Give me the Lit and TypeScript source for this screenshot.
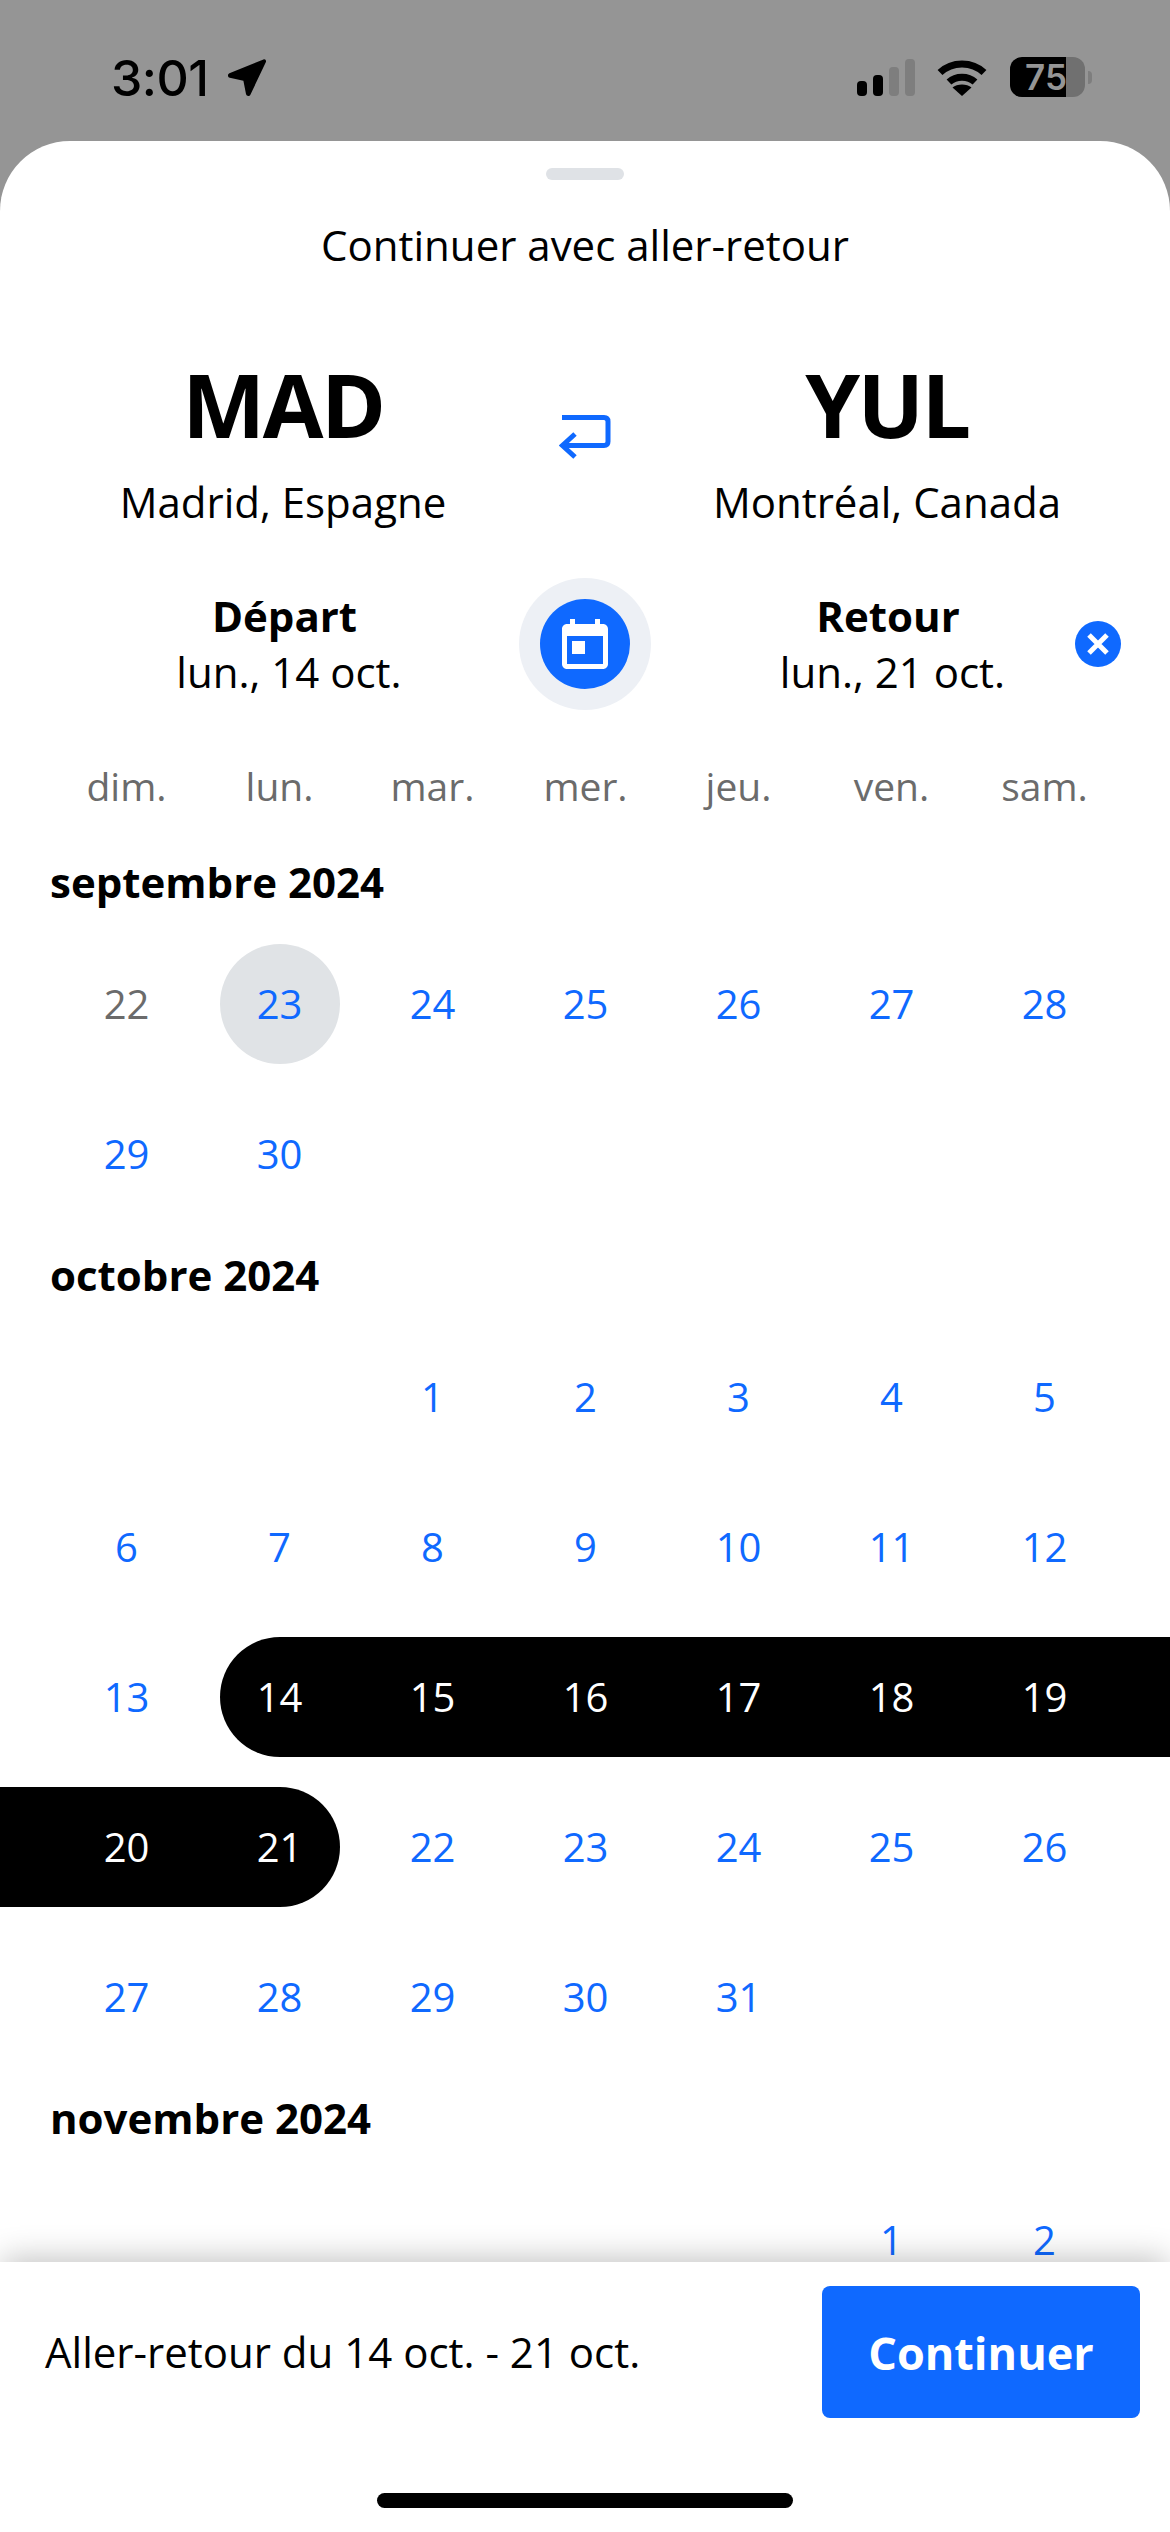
import { LitElement, html, css } from "lit";
import { customElement } from "lit/decorators.js";
import { classMap } from "lit/directives/class-map.js";

const WEEKDAYS = ["dim.", "lun.", "mar.", "mer.", "jeu.", "ven.", "sam."];

interface Month {
    title: string;
    offset: number; // empty cells before the first shown day
    first: number;
    last: number;
}

const MONTHS: Month[] = [
    { title: "septembre 2024", offset: 0, first: 22, last: 30 },
    { title: "octobre 2024", offset: 2, first: 1, last: 31 },
    { title: "novembre 2024", offset: 5, first: 1, last: 2 },
];

@customElement("app-root")
export class AppRoot extends LitElement {
    static styles = css`
        :host {
            display: block;
            width: 1170px;
            height: 2532px;
            overflow: hidden;
            background-color: #959595;
            font-family: "Open Sans", sans-serif;
            color: #000;
        }

        .status {
            box-sizing: border-box;
            display: flex;
            align-items: flex-start;
            height: 141px;
            padding: 57px 78px 0px 111px;
        }

        .time {
            font-family: "Inter", sans-serif;
            font-size: 50px;
            line-height: 42px;
            font-weight: 500;
            letter-spacing: -0.5px;
        }

        .arrow {
            margin: 1px 0px 0px 18px;
        }

        .status-right {
            display: flex;
            align-items: flex-start;
            margin-left: auto;
        }

        .signal {
            display: flex;
            align-items: flex-end;
            gap: 6px;
            height: 37px;
            margin-top: 2px;
        }

        .signal span {
            width: 10px;
            border-radius: 4px;
            background-color: #000;
        }

        .signal span.off {
            background-color: #7e7e7e;
        }

        .wifi {
            margin: 2px 23px 0px 22px;
        }

        .battery {
            display: flex;
            align-items: center;
            justify-content: center;
            box-sizing: border-box;
            width: 75px;
            height: 40px;
            padding-right: 3px;
            border-radius: 12px;
            background: linear-gradient(to right, #000 56px, #707070 56px);
            font-family: "Inter", sans-serif;
            font-size: 35px;
            font-weight: 600;
            color: #959595;
        }

        .nub {
            width: 4px;
            height: 13px;
            margin: 14px 0px 0px 3px;
            border-radius: 0px 4px 4px 0px;
            background-color: #7e7e7e;
        }

        .sheet {
            display: flex;
            flex-direction: column;
            height: 2391px;
            overflow: hidden;
            border-radius: 70px 70px 0px 0px;
            background-color: #fff;
        }

        .handle {
            flex: none;
            width: 78px;
            height: 12px;
            margin: 27px auto 0px auto;
            border-radius: 6px;
            background-color: #dfe2e6;
        }

        .title {
            flex: none;
            margin-top: 36px;
            text-align: center;
            font-size: 42px;
            line-height: 58px;
        }

        .route {
            flex: none;
            display: grid;
            grid-template-columns: 566px 38px 566px;
            margin-top: 84px;
        }

        .place {
            text-align: center;
            font-size: 42px;
            line-height: 56px;
        }

        .code {
            font-size: 88px;
            line-height: 92px;
            font-weight: 700;
            letter-spacing: -2.5px;
            margin-bottom: 24px;
        }

        .swap {
            align-self: start;
            margin: 57px 0px 0px -7px;
        }

        .dates {
            flex: none;
            display: grid;
            grid-template-columns: 519px 132px 519px;
            align-items: center;
            margin-top: 48px;
        }

        .date {
            position: relative;
            text-align: center;
            font-size: 42px;
            line-height: 56px;
        }

        .date.left {
            padding-left: 50px;
        }

        .date.right {
            padding-right: 45px;
        }

        .date b {
            display: block;
            font-weight: 700;
            font-size: 42px;
        }

        .date span {
            display: block;
            margin-left: 9px;
        }

        .cal-btn {
            display: flex;
            align-items: center;
            justify-content: center;
            width: 132px;
            height: 132px;
            border-radius: 50%;
            background-color: #edf0f5;
        }

        .cal-btn div {
            display: flex;
            align-items: center;
            justify-content: center;
            width: 90px;
            height: 90px;
            border-radius: 50%;
            background-color: #0f69ff;
        }

        .clear {
            position: absolute;
            top: 50%;
            right: 49px;
            width: 46px;
            height: 46px;
            margin-top: -23px;
        }

        .weekdays {
            flex: none;
            display: grid;
            grid-template-columns: repeat(7, 153px);
            padding: 0px 50px;
            margin-top: 50px;
            text-align: center;
            font-size: 39px;
            line-height: 52px;
            color: #6b6b6b;
        }

        .calendar {
            flex: 1;
            min-height: 0px;
            overflow: hidden;
            padding: 8.5px 50px 0px 50px;
        }

        h2 {
            margin: 33.5px 0px;
            font-size: 42px;
            line-height: 56px;
            font-weight: 700;
        }

        .grid {
            display: grid;
            grid-template-columns: repeat(7, 153px);
            grid-auto-rows: 120px;
            row-gap: 30px;
        }

        .day {
            display: flex;
            align-items: center;
            justify-content: center;
            font-size: 40px;
            line-height: 40px;
            color: #0f69ff;
        }

        .past {
            color: #6b6b6b;
        }

        .today {
            width: 120px;
            justify-self: center;
            border-radius: 50%;
            background-color: #e0e3e6;
        }

        .range {
            background-color: #000;
            color: #fff;
        }

        .start {
            padding-left: 16.5px;
            margin-left: 16.5px;
            border-radius: 60px 0px 0px 60px;
        }

        .end {
            padding-right: 16.5px;
            margin-right: 16.5px;
            border-radius: 0px 60px 60px 0px;
        }

        .bleed-right {
            padding-right: 50px;
            margin-right: -50px;
        }

        .bleed-left {
            padding-left: 50px;
            margin-left: -50px;
        }

        .start span {
            margin-left: -33px;
        }

        .end span {
            margin-right: -33px;
        }

        footer {
            flex: none;
            position: relative;
            display: flex;
            align-items: flex-start;
            justify-content: space-between;
            box-sizing: border-box;
            height: 270px;
            padding: 24px 30px 0px 45px;
            background-color: #fff;
            box-shadow: 0px -6px 30px -2px rgba(0, 0, 0, 0.24);
        }

        .summary {
            height: 132px;
            line-height: 132px;
            font-size: 42px;
        }

        .continue {
            display: flex;
            align-items: center;
            justify-content: center;
            width: 318px;
            height: 132px;
            border-radius: 8px;
            background-color: #0f69ff;
            color: #fff;
            font-size: 45px;
            font-weight: 700;
        }

        .home {
            position: absolute;
            left: 377px;
            bottom: 24px;
            width: 416px;
            height: 15px;
            border-radius: 8px;
            background-color: #000;
        }
    `;

    private dayClasses(month: Month, d: number) {
        const oct = month.title.startsWith("octobre");
        const sep = month.title.startsWith("septembre");
        return {
            day: true,
            past: sep && d === 22,
            today: sep && d === 23,
            range: oct && d >= 14 && d <= 21,
            start: oct && d === 14,
            end: oct && d === 21,
            "bleed-right": oct && d === 19,
            "bleed-left": oct && d === 20,
        };
    }

    private renderMonth(month: Month) {
        const days: number[] = [];
        for (let d = month.first; d <= month.last; d++) days.push(d);
        return html`
            <h2>${month.title}</h2>
            <div class="grid">
                ${Array.from({ length: month.offset }, () => html`<div></div>`)}
                ${days.map(
                    (d) => html`<div class=${classMap(this.dayClasses(month, d))}><span>${d}</span></div>`
                )}
            </div>
        `;
    }

    render() {
        return html`
            <div class="status">
                <div class="time">3:01</div>
                <svg class="arrow" width="40" height="40" viewBox="0 0 40 40">
                    <path
                        d="M36.5 1.5c1.6-.6 3 .9 2.4 2.5L23.5 36.5c-1 2.2-4 1.9-4.5-.4l-2.6-13.4-13.6-3c-2.2-.5-2.5-3.500-.4-4.400z"
                        fill="#000"
                    ></path>
                </svg>
                <div class="status-right">
                    <div class="signal">
                        <span style="height: 15px"></span>
                        <span style="height: 21px"></span>
                        <span class="off" style="height: 29px"></span>
                        <span class="off" style="height: 37px"></span>
                    </div>
                    <svg class="wifi" width="50" height="37" viewBox="0 0 50 37" fill="none">
                        <path d="M3 13.500C15 2 35 2 47 13.500" stroke="#000" stroke-width="7"></path>
                        <path d="M12 23C19 16.500 31 16.500 38 23" stroke="#000" stroke-width="7"></path>
                        <path d="M25 37L15.500 28.500C20 24.500 30 24.500 34.500 28.500z" fill="#000"></path>
                    </svg>
                    <div class="battery">75</div>
                    <div class="nub"></div>
                </div>
            </div>
            <div class="sheet">
                <div class="handle"></div>
                <div class="title">Continuer avec aller-retour</div>
                <div class="route">
                    <div class="place">
                        <div class="code">MAD</div>
                        Madrid, Espagne
                    </div>
                    <svg class="swap" width="52" height="44" viewBox="0 0 52 44" fill="none">
                        <path
                            d="M3 2.500H45c2.500 0 4 1.500 4 4V26.500c0 2.500-1.500 4-4 4H5M16 19L3.500 30.500 16 42"
                            stroke="#0f69ff"
                            stroke-width="5"
                        ></path>
                    </svg>
                    <div class="place">
                        <div class="code">YUL</div>
                        Montréal, Canada
                    </div>
                </div>
                <div class="dates">
                    <div class="date left"><b>Départ</b><span>lun., 14 oct.</span></div>
                    <div class="cal-btn">
                        <div>
                            <svg width="46" height="50" viewBox="0 0 46 50">
                                <path
                                    fill="#fff"
                                    fill-rule="evenodd"
                                    d="M8 0h5v5h20V0h5v5h3c2.800 0 5 2.200 5 5v35c0 2.800-2.200 5-5 5H5c-2.800 0-5-2.200-5-5V10c0-2.800 2.200-5 5-5h3zM5 17v28h36V17zM10 22h13v13H10z"
                                ></path>
                            </svg>
                        </div>
                    </div>
                    <div class="date right">
                        <b>Retour</b><span>lun., 21 oct.</span>
                        <svg class="clear" viewBox="0 0 46 46">
                            <circle cx="23" cy="23" r="23" fill="#0f69ff"></circle>
                            <path d="M14 14L32 32M32 14L14 32" stroke="#fff" stroke-width="5"></path>
                        </svg>
                    </div>
                </div>
                <div class="weekdays">${WEEKDAYS.map((w) => html`<div>${w}</div>`)}</div>
                <div class="calendar">${MONTHS.map((m) => this.renderMonth(m))}</div>
                <footer>
                    <div class="summary">Aller-retour du 14 oct. - 21 oct.</div>
                    <div class="continue">Continuer</div>
                    <div class="home"></div>
                </footer>
            </div>
        `;
    }
}
